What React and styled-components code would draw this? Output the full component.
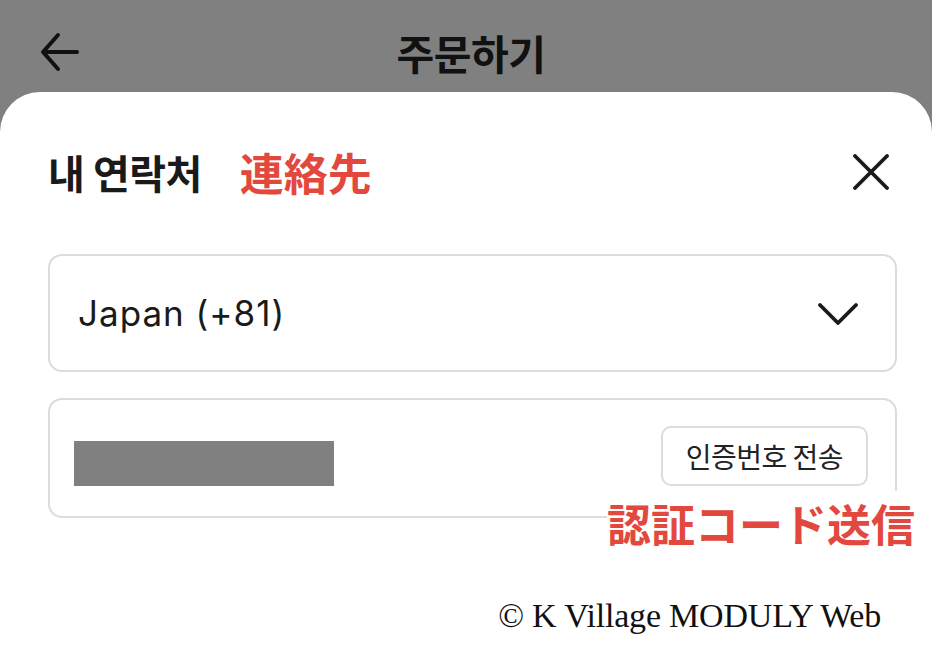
import React from "react";
import styled, { createGlobalStyle } from "styled-components";

const GlobalStyle = createGlobalStyle`
  html, body { margin: 0; padding: 0; background: #808080; }
  body { font-family: "Inter", "Noto Sans CJK KR", sans-serif; }
  * { box-sizing: border-box; }
`;

const Page = styled.div`
  width: 932px;
  height: 655px;
  background: #808080;
  display: flex;
  flex-direction: column;
  overflow: hidden;
`;

const TopBar = styled.header`
  height: 92px;
  display: grid;
  grid-template-columns: 80px 1fr 80px;
  align-items: center;
  padding: 12px 40px 0 40px;
`;

const IconButton = styled.button`
  border: 0;
  background: transparent;
  padding: 0;
  display: flex;
  align-items: center;
  justify-content: flex-start;
  color: #111;
  cursor: pointer;
`;

const TopTitle = styled.h1`
  margin: 0;
  text-align: center;
  font-family: "Noto Sans CJK KR", sans-serif;
  font-size: 41px;
  font-weight: 700;
  color: #111;
  letter-spacing: -0.5px;
  padding-left: 10px;
  line-height: 1;
`;

const Sheet = styled.section`
  flex: 1;
  background: #fff;
  border-radius: 40px 40px 0 0;
  padding: 54px 35px 0 48px;
  display: flex;
  flex-direction: column;
`;

const SheetHeader = styled.div`
  display: flex;
  align-items: center;
  justify-content: space-between;
  height: 52px;
`;

const HeadingGroup = styled.div`
  display: flex;
  align-items: center;
  gap: 38px;
`;

const Heading = styled.h2`
  margin: 0;
  font-family: "Noto Sans CJK KR", sans-serif;
  font-size: 40px;
  font-weight: 700;
  color: #1a1a1a;
  letter-spacing: -0.5px;
`;

const Note = styled.span`
  font-family: "Noto Sans CJK JP", sans-serif;
  font-weight: 700;
  font-size: ${(p) => p.$size || 44}px;
  color: #e2483d;
  line-height: 1;
  background: #fff;
`;

const Field = styled.div`
  position: relative;
  height: ${(p) => p.$h}px;
  margin-top: ${(p) => p.$mt}px;
  border: 2px solid #dcdcdc;
  border-radius: 14px;
  display: flex;
  align-items: center;
  justify-content: space-between;
  padding: 0 ${(p) => p.$pr}px 0 ${(p) => p.$pl}px;
`;

const SelectText = styled.span`
  font-family: "Inter", "Noto Sans", sans-serif;
  font-size: 35px;
  color: #1a1a1a;
  letter-spacing: 1px;
`;

const Masked = styled.div`
  width: 260px;
  height: 45px;
  background: #808080;
  margin-top: 10px;
`;

const SendButton = styled.button`
  height: 60px;
  padding: 0 23px;
  border: 2px solid #dcdcdc;
  border-radius: 10px;
  background: #fff;
  font-family: "Noto Sans CJK KR", sans-serif;
  font-size: 28px;
  color: #222;
  letter-spacing: -0.5px;
  margin-bottom: 4px;
`;

const FieldNote = styled.div`
  position: absolute;
  right: -20px;
  top: 101px;
`;

const Footer = styled.p`
  margin: 79px 16px 0 0;
  text-align: right;
  font-family: "Liberation Serif", "DejaVu Serif", serif;
  font-size: 34px;
  color: #111;
  letter-spacing: -0.2px;
`;

const BackIcon = () => (
  <svg width="40" height="40" viewBox="0 0 40 40" fill="none" stroke="currentColor" strokeWidth="4" strokeLinecap="round" strokeLinejoin="round">
    <path d="M37 20H4M18 3L3 20l15 17" />
  </svg>
);

const CloseIcon = () => (
  <svg width="36" height="36" viewBox="0 0 36 36" fill="none" stroke="#1a1a1a" strokeWidth="3.8" strokeLinecap="round">
    <path d="M2 2l32 32M34 2L2 34" />
  </svg>
);

const ChevronIcon = () => (
  <svg width="42" height="24" viewBox="0 0 42 24" fill="none" stroke="#1a1a1a" strokeWidth="3.8" strokeLinecap="round" strokeLinejoin="round">
    <path d="M3 4l18 18L39 4" />
  </svg>
);

export default function App() {
  return (
    <>
      <GlobalStyle />
      <Page>
        <TopBar>
          <IconButton aria-label="back"><BackIcon /></IconButton>
          <TopTitle>주문하기</TopTitle>
          <span />
        </TopBar>
        <Sheet>
          <SheetHeader>
            <HeadingGroup>
              <Heading>내 연락처</Heading>
              <Note>連絡先</Note>
            </HeadingGroup>
            <IconButton aria-label="close" style={{ marginRight: 8 }}><CloseIcon /></IconButton>
          </SheetHeader>
          <Field $h={118} $mt={56} $pl={28} $pr={36}>
            <SelectText>Japan (+81)</SelectText>
            <ChevronIcon />
          </Field>
          <Field $h={120} $mt={26} $pl={24} $pr={27}>
            <Masked />
            <SendButton>인증번호 전송</SendButton>
            <FieldNote>
              <Note $size={44}>認証コード送信</Note>
            </FieldNote>
          </Field>
          <Footer>© K Village MODULY Web</Footer>
        </Sheet>
      </Page>
    </>
  );
}
